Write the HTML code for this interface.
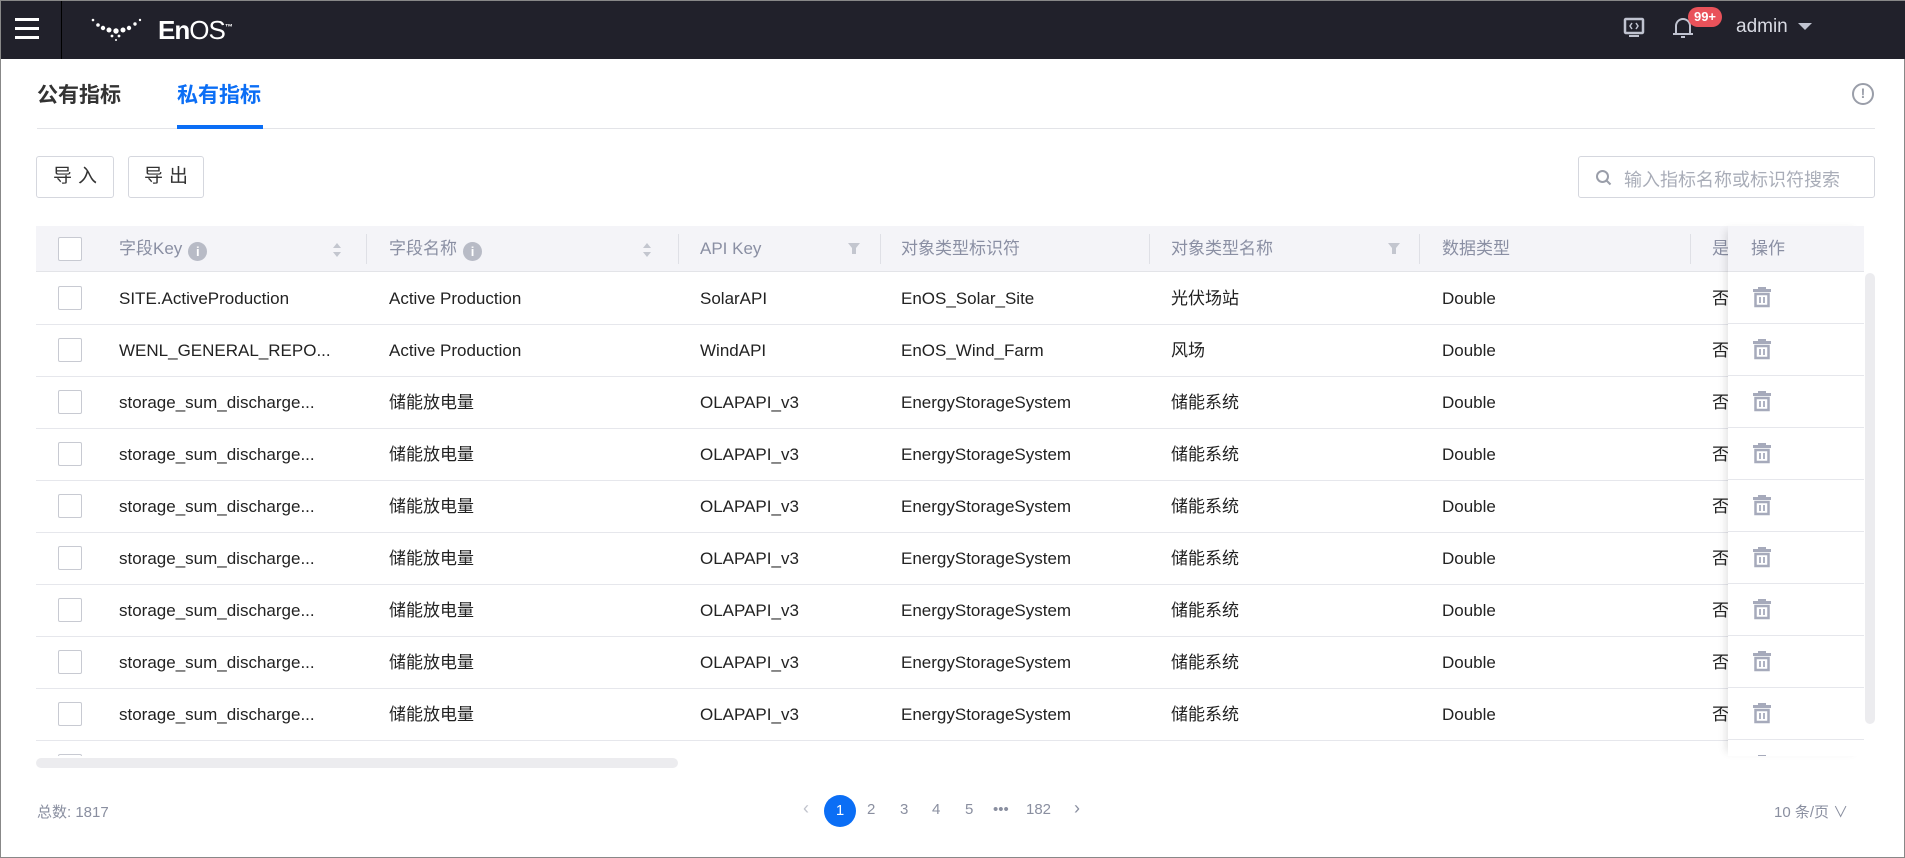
<!DOCTYPE html>
<html><head><meta charset="utf-8"><style>
*{box-sizing:border-box;margin:0;padding:0}
body{width:1905px;height:858px;overflow:hidden;background:#fff;font-family:"Liberation Sans","Noto Sans CJK SC",sans-serif;position:relative;border:1px solid #888;}
.a{position:absolute}
.top{left:0;top:0;width:1905px;height:58px;background:#21212b;}
.hd{color:#8a8fa3;font-size:17px;line-height:46px}
.cell{font-size:17px;color:#222;white-space:nowrap;line-height:52px}
.row{left:35px;width:1828px;height:52px;border-bottom:1px solid #e6e7ec}
.cb{width:24px;height:24px;border:1px solid #c8cad2;border-radius:2px;background:#fff}
.sep{width:1px;height:30px;background:#dfe0e6;top:233px}
.pg{top:800px;font-size:15px;color:#8a8fa0}
.ii{display:inline-block;width:19px;height:19px;border-radius:50%;background:#b8bbc6;color:#fff;font-size:13px;text-align:center;line-height:19px;font-weight:bold;vertical-align:-2px;margin-left:6px}
</style></head><body>
<div class="a top"></div>
<div class="a" style="left:14px;top:17px;width:24px;height:3px;background:#fff;box-shadow:0 9px 0 #fff,0 18px 0 #fff"></div>
<div class="a" style="left:60px;top:0;width:1px;height:58px;background:#000"></div>
<svg class="a" style="left:89px;top:16px" width="56" height="26"><g fill="#fff"><circle cx="3" cy="3" r="1.3"/><circle cx="8" cy="8" r="1.8"/><circle cx="13" cy="11" r="2.2"/><circle cx="19" cy="13" r="2.5"/><circle cx="26" cy="14" r="2.7"/><circle cx="33" cy="13" r="2.5"/><circle cx="39" cy="11" r="2.2"/><circle cx="45" cy="7" r="1.7"/><circle cx="50" cy="3" r="1.2"/><circle cx="22" cy="19" r="1.4"/><circle cx="29" cy="19" r="1.4"/><circle cx="26" cy="23" r="1"/></g></svg>
<div class="a" style="left:157px;top:14px;color:#fff;font-size:26px;font-weight:bold;letter-spacing:-1px">En<span style="font-weight:normal">OS</span><sup style="font-size:8px">™</sup></div>
<svg class="a" style="left:1622px;top:16px" width="22" height="22"><rect x="2" y="2" width="18" height="14" rx="1" fill="none" stroke="#c0c3d0" stroke-width="2.5"/><rect x="6" y="18" width="10" height="2" fill="#c0c3d0"/><path d="M9 6l-2 3 2 3M13 6l2 3-2 3" stroke="#c0c3d0" stroke-width="1.5" fill="none"/></svg>
<svg class="a" style="left:1670px;top:14px" width="24" height="26"><path d="M5 19V11a7 7 0 0 1 14 0v8M2 19h20M10 22h4" stroke="#c0c3d0" stroke-width="2" fill="none"/></svg>
<div class="a" style="left:1687px;top:6px;width:34px;height:20px;border-radius:10px;background:#e9525a;color:#fff;font-size:13px;font-weight:bold;text-align:center;line-height:20px">99+</div>
<div class="a" style="left:1735px;top:15px;color:#d8dae3;font-size:19px">admin</div>
<div class="a" style="left:1797px;top:22px;border:7px solid transparent;border-top:7px solid #c0c3d0"></div>

<div class="a" style="left:36px;top:78px;font-size:21px;font-weight:bold;color:#333">公有指标</div>
<div class="a" style="left:176px;top:78px;font-size:21px;font-weight:bold;color:#0b6ef5">私有指标</div>
<div class="a" style="left:36px;top:127px;width:1838px;height:1px;background:#e3e4e8"></div>
<div class="a" style="left:176px;top:124px;width:86px;height:4px;background:#0b6ef5"></div>
<div class="a" style="left:1851px;top:82px;width:22px;height:22px;border:2.5px solid #9a9ea9;border-radius:50%;color:#9a9ea9;font-size:14px;font-weight:bold;text-align:center;line-height:17px">!</div>

<div class="a" style="left:35px;top:155px;width:78px;height:42px;border:1px solid #d5d7de;border-radius:3px;font-size:19px;color:#333;text-align:center;line-height:40px;letter-spacing:6px;padding-left:6px">导入</div>
<div class="a" style="left:127px;top:155px;width:76px;height:42px;border:1px solid #d5d7de;border-radius:3px;font-size:19px;color:#333;text-align:center;line-height:40px;letter-spacing:6px;padding-left:6px">导出</div>
<div class="a" style="left:1577px;top:155px;width:297px;height:42px;border:1px solid #d5d7de;border-radius:3px"></div>
<svg class="a" style="left:1594px;top:168px" width="18" height="18"><circle cx="7.5" cy="7.5" r="5.5" stroke="#9a9ea9" stroke-width="2" fill="none"/><path d="M11.5 11.5l4 4" stroke="#9a9ea9" stroke-width="2"/></svg>
<div class="a" style="left:1623px;top:165px;font-size:18px;color:#a9adb8">输入指标名称或标识符搜索</div>

<div class="a" style="left:35px;top:225px;width:1828px;height:46px;background:#f4f4f8;border-bottom:1px solid #e3e4e8"></div>
<div class="a cb" style="left:57px;top:236px"></div>
<div class="a hd" style="left:118px;top:225px">字段Key<span class="ii">i</span></div>
<div class="a hd" style="left:388px;top:225px">字段名称<span class="ii">i</span></div>
<div class="a hd" style="left:699px;top:225px">API Key</div>
<div class="a hd" style="left:900px;top:225px">对象类型标识符</div>
<div class="a hd" style="left:1170px;top:225px">对象类型名称</div>
<div class="a hd" style="left:1441px;top:225px">数据类型</div>
<div class="a hd" style="left:1711px;top:225px">是</div>
<svg class="a" style="left:330px;top:239px" width="12" height="20"><path d="M2 8l4-5 4 5zM2 12l4 5 4-5z" fill="#c3c6cf"/></svg>
<svg class="a" style="left:640px;top:239px" width="12" height="20"><path d="M2 8l4-5 4 5zM2 12l4 5 4-5z" fill="#c3c6cf"/></svg>
<svg class="a" style="left:846px;top:240px" width="14" height="16"><path d="M1 2h12l-4 5v6H5V7z" fill="#c3c6cf"/></svg>
<svg class="a" style="left:1386px;top:240px" width="14" height="16"><path d="M1 2h12l-4 5v6H5V7z" fill="#c3c6cf"/></svg>
<div class="a sep" style="left:365px"></div><div class="a sep" style="left:677px"></div><div class="a sep" style="left:879px"></div><div class="a sep" style="left:1148px"></div><div class="a sep" style="left:1418px"></div><div class="a sep" style="left:1689px"></div>

<div class="a" style="left:35px;top:272px;width:1828px;height:483px;overflow:hidden">
<div style="position:relative;left:-35px;top:-272px">
ROWS
</div></div>

<div class="a" style="left:1727px;top:225px;width:136px;height:530px;overflow:hidden;background:#fff;box-shadow:-6px 0 8px -4px rgba(0,0,0,0.12)">
<div style="height:46px;background:#f4f4f8;border-bottom:1px solid #e3e4e8;padding-left:23px" class="hd">操作</div>
TRASH
</div>
<div class="a" style="left:1864px;top:272px;width:10px;height:451px;background:#ececef;border-radius:5px"></div>
<div class="a" style="left:35px;top:757px;width:642px;height:10px;background:#ececef;border-radius:5px"></div>

<div class="a pg" style="left:36px">总数: 1817</div>
<div class="a pg" style="left:802px;font-size:18px;top:797px;color:#c0c3cc">‹</div>
<div class="a" style="left:823px;top:794px;width:32px;height:32px;border-radius:50%;background:#0b6ef5;color:#fff;font-size:15px;text-align:center;line-height:32px">1</div>
<div class="a pg" style="left:866px">2</div>
<div class="a pg" style="left:899px">3</div>
<div class="a pg" style="left:931px">4</div>
<div class="a pg" style="left:964px">5</div>
<div class="a pg" style="left:992px">•••</div>
<div class="a pg" style="left:1025px">182</div>
<div class="a pg" style="left:1073px;font-size:18px;top:797px">›</div>
<div class="a pg" style="left:1773px">10 条/页 ∨</div>
<script>
var d=[["SITE.ActiveProduction","Active Production","SolarAPI","EnOS_Solar_Site","光伏场站"],["WENL_GENERAL_REPO...","Active Production","WindAPI","EnOS_Wind_Farm","风场"]];
for(var i=0;i<8;i++)d.push(["storage_sum_discharge...","储能放电量","OLAPAPI_v3","EnergyStorageSystem","储能系统"]);
var h="",t="";
for(var i=0;i<10;i++){var y=272+i*52,r=d[i];
h+='<div class="a row" style="top:'+y+'px"></div><div class="a cb" style="left:57px;top:'+(y+13)+'px"></div>';
var xs=[118,388,699,900,1170];for(var j=0;j<5;j++)h+='<div class="a cell" style="left:'+xs[j]+'px;top:'+y+'px">'+r[j]+'</div>';
h+='<div class="a cell" style="left:1441px;top:'+y+'px">Double</div><div class="a cell" style="left:1711px;top:'+y+'px">否</div>';
t+='<div style="height:52px;border-bottom:1px solid #e6e7ec;position:relative"><svg style="position:absolute;left:23px;top:15px" width="22" height="22"><rect x="2" y="2" width="18" height="3" fill="#a6aabb"/><rect x="7" y="0" width="8" height="3" fill="#a6aabb"/><path d="M4.5 7h13v12h-13z" fill="none" stroke="#a6aabb" stroke-width="2.5"/><path d="M9 10v6M13 10v6" stroke="#a6aabb" stroke-width="1.8"/></svg></div>';}
document.body.innerHTML=document.body.innerHTML.replace("ROWS",h).replace("TRASH",t);
</script>
</body></html>
